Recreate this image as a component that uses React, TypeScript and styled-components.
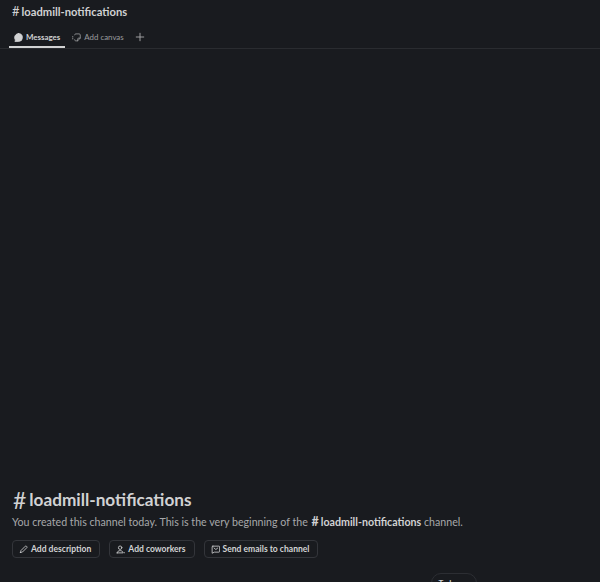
import React, { FC, ReactNode } from "react";
import styled, { createGlobalStyle } from "styled-components";

const GlobalStyle = createGlobalStyle`
  html, body {
    margin: 0;
    padding: 0;
    background: #191b1f;
  }
  body {
    font-family: Lato, "Noto Sans", sans-serif;
    font-variant-ligatures: common-ligatures;
  }
`;

const Page = styled.div`
  width: 600px;
  height: 582px;
  display: flex;
  flex-direction: column;
  overflow: hidden;
  background: #191b1f;
  color: #d1d2d3;
`;

const Header = styled.header`
  flex: none;
  height: 49px;
  box-sizing: border-box;
  border-bottom: 1px solid #2a2c30;
  display: flex;
  flex-direction: column;
`;

const Title = styled.h1`
  margin: 0;
  padding: 2px 0 0 12px;
  height: 19px;
  box-sizing: content-box;
  display: flex;
  align-items: center;
  gap: 2px;
  font-size: 11.2px;
  font-weight: 700;
  color: #d1d2d3;
`;

const Hash = styled.span`
  font-size: 13px;
  font-weight: 400;
`;

const Tabs = styled.nav`
  display: flex;
  align-items: center;
  height: 26px;
  margin-top: 2px;
  padding-left: 9px;
`;

const Tab = styled.div<{ $active?: boolean }>`
  height: 100%;
  box-sizing: border-box;
  display: flex;
  align-items: center;
  gap: 3px;
  padding: 6px 5px 0;
  margin-right: 2px;
  font-size: 7.9px;
  font-weight: ${(p) => (p.$active ? 700 : 400)};
  color: ${(p) => (p.$active ? "#d1d2d3" : "#9a9b9e")};
  border-bottom: 2px solid ${(p) => (p.$active ? "#d1d2d3" : "transparent")};
`;

const AddTab = styled.div`
  display: flex;
  margin: 4px 0 0 4px;
  color: #a8a9ab;
`;

const Body = styled.main`
  flex: 1;
  display: flex;
  flex-direction: column;
  justify-content: flex-end;
  min-height: 0;
`;

const Intro = styled.section`
  padding: 0 12px;
`;

const IntroTitle = styled.h2`
  margin: 0;
  display: flex;
  align-items: center;
  gap: 3px;
  font-size: 17.2px;
  line-height: 22px;
  font-weight: 700;
  color: #d1d2d3;
`;

const IntroHash = styled.span`
  font-size: 23px;
  font-weight: 400;
  line-height: 22px;
  padding-left: 1px;
`;

const IntroText = styled.p`
  margin: 3px 0 0;
  font-size: 10.65px;
  line-height: 16px;
  color: #a7a8aa;
`;

const ChannelRef = styled.strong`
  margin-left: 1px;
  font-weight: 700;
  color: #d1d2d3;
`;

const RefHash = styled.span`
  font-size: 12.5px;
  margin-right: 2px;
`;

const Actions = styled.div`
  display: flex;
  gap: 9px;
  margin-top: 10px;
`;

const ActionButton = styled.button`
  height: 18px;
  box-sizing: border-box;
  display: flex;
  align-items: center;
  gap: 3px;
  padding: 0 8px 0 6px;
  background: transparent;
  border: 1px solid #33353a;
  border-radius: 4px;
  font-family: inherit;
  font-size: 8.55px;
  font-weight: 700;
  color: #d1d2d3;
`;

const DividerRow = styled.div`
  height: 9px;
  margin-top: 15px;
  display: flex;
  justify-content: flex-end;
  padding-right: 111px;
`;

const DayPill = styled.div`
  height: 20px;
  width: 46px;
  box-sizing: border-box;
  display: flex;
  gap: 3px;
  align-items: center;
  justify-content: center;
  border: 1px solid #2c2e33;
  border-radius: 10px;
  font-size: 8px;
  font-weight: 700;
  color: #d1d2d3;
`;

const Icon: FC<{ size?: number; width?: number; children: ReactNode }> = ({
  size = 9,
  width = 1.1,
  children,
}) => (
  <svg
    width={size}
    height={size}
    viewBox="0 0 12 12"
    fill="none"
    stroke="currentColor"
    strokeWidth={width}
    strokeLinecap="round"
    strokeLinejoin="round"
  >
    {children}
  </svg>
);

const App = () => {
  return (
    <Page>
      <GlobalStyle />
      <Header>
        <Title>
          <Hash>#</Hash>
          loadmill-notifications
        </Title>
        <Tabs>
          <Tab $active>
            <Icon>
              <path
                d="M6 .8a5.2 5.2 0 0 1 0 10.4H1.2c.6-.8.7-1.6.3-2.6A5.2 5.2 0 0 1 6 .8Z"
                fill="currentColor"
              />
            </Icon>
            Messages
          </Tab>
          <Tab>
            <Icon>
              <path d="M3.5 2.5A1.5 1.5 0 0 1 5 1.2h4.5A1.5 1.5 0 0 1 11 2.7v4L7.5 10.5H5A1.5 1.5 0 0 1 3.5 9" />
              <path d="M7.5 10.5V8.3A1.5 1.5 0 0 1 9 6.8h2" />
              <path d="M1 4.5v1M1 7.2v.8" />
            </Icon>
            Add canvas
          </Tab>
          <AddTab>
            <Icon size={10}>
              <path d="M6 1.5v9M1.5 6h9" />
            </Icon>
          </AddTab>
        </Tabs>
      </Header>
      <Body>
        <Intro>
          <IntroTitle>
            <IntroHash>#</IntroHash>
            loadmill-notifications
          </IntroTitle>
          <IntroText>
            You created this channel today. This is the very beginning of the{" "}
            <ChannelRef>
              <RefHash>#</RefHash>
              loadmill-notifications
            </ChannelRef>{" "}
            channel.
          </IntroText>
          <Actions>
            <ActionButton>
              <Icon>
                <path d="M2 10l.6-2.6L8.4 1.6a1 1 0 0 1 1.5 0l.5.5a1 1 0 0 1 0 1.5L4.6 9.4 2 10Z" />
              </Icon>
              Add description
            </ActionButton>
            <ActionButton>
              <Icon>
                <circle cx="5.5" cy="3.6" r="2.3" />
                <path d="M1.5 10.5c.3-2 1.9-3 4-3s3.7 1 4 3H1.5ZM11 10v.5" />
              </Icon>
              Add coworkers
            </ActionButton>
            <ActionButton>
              <Icon>
                <path d="M2.5 1.5h8a1 1 0 0 1 1 1v6a1 1 0 0 1-1 1H4.5L1.5 11V2.5a1 1 0 0 1 1-1Z" />
                <path d="M4 4l2.5 2L9 4" />
              </Icon>
              Send emails to channel
            </ActionButton>
          </Actions>
          <DividerRow>
            <DayPill>
              Today
              <Icon size={7}>
                <path d="M2.5 4.5L6 8l3.5-3.5" />
              </Icon>
            </DayPill>
          </DividerRow>
        </Intro>
      </Body>
    </Page>
  );
};

export default App;
